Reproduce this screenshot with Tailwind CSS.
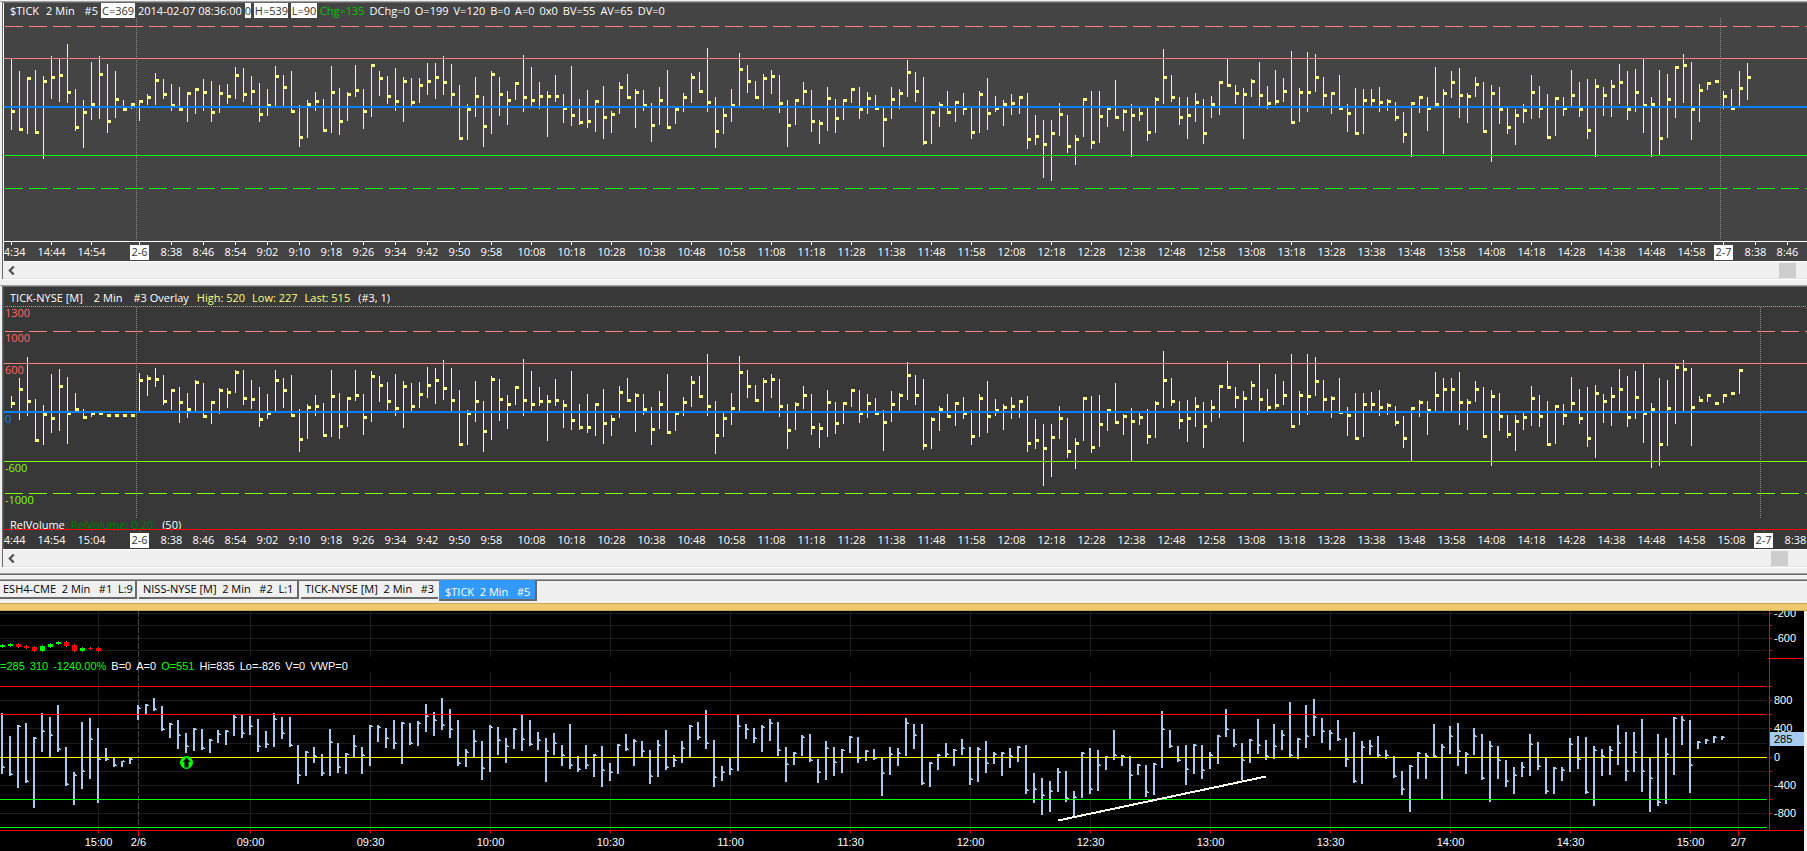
<!DOCTYPE html>
<html lang="en">
<head>
  <meta charset="UTF-8" />
  <meta name="viewport" content="width=device-width, initial-scale=1.0" />
  <title>$TICK 2 Min</title>
  <script src="https://cdn.jsdelivr.net/npm/@tailwindcss/browser@4"></script>
</head>
<body class="min-h-screen bg-[#f0f0f0] font-['Open_Sans','Noto_Sans',sans-serif] text-[11px] leading-[15px] text-white overflow-x-hidden">
  <main class="flex flex-col">

    <!-- $TICK chart -->
    <section class="mt-px border-t border-[#a0a0a0]">
      <div class="ml-[2px] border-l border-t border-[#696969]">
        <div class="border-l border-white bg-[#444444]">
          <header class="flex h-[15px] gap-[3px] overflow-hidden whitespace-pre pl-[6px]">
            <h1 class="flex w-[88px] gap-[7px]"><span>$TICK</span><span>2 Min</span><span class="ml-auto">#5</span></h1>
            <span class="w-[34px] overflow-hidden bg-white pl-px text-[#333333]">C=369</span>
            <span>2014-02-07 08:36:00</span>
            <span class="w-[6px] overflow-hidden bg-white text-[#333333]">0</span>
            <span class="w-[34px] overflow-hidden bg-white pl-px text-[#333333]">H=539</span>
            <span class="w-[26px] overflow-hidden bg-white pl-px text-[#333333]">L=90</span>
            <p class="flex gap-[5px]">
              <span class="text-[#00c800]">Chg=135</span>
              <span>DChg=0</span>
              <span>O=199</span>
              <span>V=120</span>
              <span>B=0</span>
              <span>A=0</span>
              <span>0x0</span>
              <span>BV=55</span>
              <span>AV=65</span>
              <span>DV=0</span>
            </p>
          </header>
          <svg class="block h-[243px] w-full" shape-rendering="crispEdges">
            <g transform="translate(-4,-18)">
              <path d="M136.5 18V240M1720.5 18V240" stroke="#8c8c8c" stroke-dasharray="1 1" />
              <line x1="5" x2="102%" y1="26.5" y2="26.5" stroke="#ff8080" stroke-dasharray="18 6" />
              <line x1="5" x2="102%" y1="188.5" y2="188.5" stroke="#00ff00" stroke-dasharray="18 6" />
              <g id="tickBars" transform="translate(0,0)" fill="#ffff80"></g>
              <rect x="4" y="58" width="100%" height="1" fill="#ff8080" />
              <rect x="4" y="155" width="100%" height="1" fill="#00ff00" />
              <rect x="4" y="106" width="100%" height="2" fill="#0a80ff" />
              <rect x="4" y="241" width="100%" height="1" fill="#ffffff" />
              <g id="tickAxis" transform="translate(0,242)" fill="#ffffff"></g>
            </g>
          </svg>
        </div>
        <div class="flex h-[18px] items-center border-y border-t-white border-b-[#e3e3e3] pr-[11px]">
          <button type="button" class="flex h-4 w-4 items-center justify-center" aria-label="Scroll left">
            <svg class="h-[9px] w-[9px]" viewBox="0 0 8 8" fill="none" stroke="#505050" stroke-width="2"><path d="M6 0.5L2.5 4L6 7.5" /></svg>
          </button>
          <div class="ml-auto h-[15px] w-[17px] bg-[#cdcdcd]"></div>
        </div>
      </div>
      <div class="h-[6px] border-t border-white"></div>
    </section>

    <!-- TICK-NYSE chart -->
    <section class="border-t border-[#a0a0a0]">
      <div class="ml-[2px] border-l border-t border-[#696969]">
        <div class="border-l border-[#ff0000] bg-[#383838]">
          <header class="flex h-[18px] items-end gap-[8px] whitespace-pre pl-[6px] text-white">
            <h2 class="flex gap-[11px]"><span>TICK-NYSE [M]</span><span>2 Min</span><span>#3 Overlay</span></h2>
            <p class="flex gap-[7px] text-[#ffff80]"><span>High: 520</span><span>Low: 227</span><span>Last: 515</span></p>
            <span>(#3, 1)</span>
          </header>
          <svg class="block h-[213px] w-full" shape-rendering="crispEdges">
            <g transform="translate(-4,-305)">
              <path d="M136.5 307V518M1760.5 307V518" stroke="#8c8c8c" stroke-dasharray="1 1" />
              <line x1="5" x2="102%" y1="306.5" y2="306.5" stroke="#ff8080" stroke-dasharray="1 1" />
              <line x1="5" x2="102%" y1="331.5" y2="331.5" stroke="#ff8080" stroke-dasharray="18 6" />
              <line x1="5" x2="102%" y1="493.5" y2="493.5" stroke="#80ff00" stroke-dasharray="18 6" />
              <g id="nyseBars" transform="translate(0,280)" fill="#ffff80"></g>
              <rect x="4" y="363" width="100%" height="1" fill="#ff8080" />
              <rect x="4" y="461" width="100%" height="1" fill="#80ff00" />
              <rect x="4" y="411" width="100%" height="2" fill="#0a80ff" />
              <g fill="#ff6464">
                <text x="5" y="317">1300</text>
                <text x="5" y="342">1000</text>
                <text x="5" y="374">600</text>
              </g>
              <text x="5" y="423" fill="#0a80ff">0</text>
              <g fill="#80ff00">
                <text x="5" y="472">-600</text>
                <text x="5" y="504">-1000</text>
              </g>
            </g>
          </svg>
          <div class="flex h-[11px] gap-[6px] overflow-hidden whitespace-pre pl-[6px] leading-[13px]">
            <span>RelVolume</span><span class="text-[#008000]">RelVolume: 0.20</span><span class="ml-[3px]">(50)</span>
          </div>
          <svg class="block h-[20px] w-full" shape-rendering="crispEdges">
            <rect width="100%" height="1" fill="#ff0000" />
            <g id="nyseAxis" transform="translate(-4,1)" fill="#ff0000"></g>
          </svg>
        </div>
        <div class="flex h-[18px] items-center border-y border-t-white border-b-[#e3e3e3] pr-[19px]">
          <button type="button" class="flex h-4 w-4 items-center justify-center" aria-label="Scroll left">
            <svg class="h-[9px] w-[9px]" viewBox="0 0 8 8" fill="none" stroke="#505050" stroke-width="2"><path d="M6 0.5L2.5 4L6 7.5" /></svg>
          </button>
          <div class="ml-auto h-[15px] w-[17px] bg-[#cdcdcd]"></div>
        </div>
      </div>
      <div class="h-[6px] border-t border-white"></div>
      <div class="h-[7px] border-y border-t-[#a0a0a0] border-b-[#a0a0a0] shadow-[inset_0_1px_#696969]"></div>
    </section>

    <!-- Chart tabs -->
    <nav class="flex h-[23px] items-start border-t border-[#696969] text-black">
      <button type="button" class="h-[18px] w-[137px] whitespace-pre border-r-2 border-b-2 border-[#696969] pb-px pl-[3px] text-left">ESH4-CME  2 Min   #1  L:9</button>
      <button type="button" class="ml-[2px] h-[18px] w-[160px] whitespace-pre border-r-2 border-b-2 border-[#696969] pb-px pl-[4px] text-left">NISS-NYSE [M]  2 Min   #2  L:1</button>
      <button type="button" class="ml-[2px] h-[18px] w-[137px] whitespace-pre border-b-2 border-[#696969] pb-px pl-[4px] text-left">TICK-NYSE [M]  2 Min   #3</button>
      <button type="button" class="-mt-px ml-px h-[21px] w-[98px] whitespace-pre border-r-2 border-b-2 border-[#696969] bg-[#3399ff] pt-[3px] pl-[6px] text-left text-white">$TICK  2 Min   #5</button>
    </nav>
    <div class="h-[8px] border-y border-[#c8a850] bg-[#f0c86e]"></div>

    <!-- Black tick chart with price axis -->
    <section class="relative flex bg-black pr-[3px] font-['Liberation_Sans',Arial,sans-serif] shadow-[inset_-3px_0_#f0f0f0]">
      <svg class="h-[240px] min-w-0 flex-1" shape-rendering="crispEdges">
        <g transform="translate(0,-611)">
          <g id="grid" fill="#1c1c1c"></g>
          <line x1="138.5" x2="138.5" y1="611" y2="829" stroke="#484848" stroke-dasharray="6 2" />
          <g id="candles"></g>
          <g id="blueBars" transform="translate(0,565)" fill="#a6caf0"></g>
          <rect y="686" width="1767" height="1" fill="#ff0000" />
          <rect y="714" width="1767" height="1" fill="#ff0000" />
          <rect y="799" width="1767" height="1" fill="#00ff00" />
          <rect y="827" width="1767" height="1" fill="#00ff00" />
          <rect y="757" width="1767" height="1" fill="#ffff00" />
          <path d="M1058 820.5L1266 776.5" stroke="#fffff0" stroke-width="2" fill="none" />
          <rect y="830" width="100%" height="1" fill="#ff0000" />
          <g id="timeAxis" fill="#ff0000"></g>
          <g shape-rendering="auto">
            <circle cx="186.5" cy="762.5" r="6.5" fill="#00ff00" />
            <path d="M186.5 757.5L190.5 762H188.5V767.5H184.5V762H182.5Z" fill="#000000" />
          </g>
        </g>
      </svg>
      <svg class="h-[240px] w-[36px] flex-none" shape-rendering="crispEdges">
        <g id="priceAxis" transform="translate(0,-611)" fill="#ff0000">
          <rect x="1" y="611" width="1" height="220" />
          <rect y="658" width="36" height="1" />
          <rect y="830" width="36" height="1" />
        </g>
      </svg>
      <p class="absolute left-0 top-[48px] flex gap-[5px] text-[11px] leading-[15px] whitespace-pre text-[#00ff00]">
        <span>=285</span><span>310</span><span>-1240.00%</span><span class="text-white">B=0</span><span class="text-white">A=0</span><span>O=551</span><span class="text-white">Hi=835</span><span class="text-white">Lo=-826</span><span class="text-white">V=0</span><span class="text-white">VWP=0</span>
      </p>
    </section>
  </main>

  <script>
    // Bars are "high,low,last", measured down from the top of the pane in 1/3 px
    const TICK = `175,390,334 213,392,388 231,402,235 210,402,398 228,477,244 168,297,232 177,306,226 132,309,277 267,393,382 300,444,337
      186,360,313 168,357,223 192,399,364 213,354,298 300,330,328 312,327,313 302,363,304 282,315,292 219,315,241 237,297,283
      252,333,317 261,333,328 280,366,280 267,342,268 237,333,277 243,366,337 255,339,280 252,312,289 201,297,226 204,306,283
      228,315,274 249,366,343 267,348,317 198,321,229 225,318,262 213,336,334 315,441,412 300,414,313 276,333,304 297,394,391
      198,399,277 264,405,364 276,363,283 195,291,271 267,387,334 193,351,196 213,288,235 228,312,289 204,333,304 231,366,244
      234,318,307 234,309,256 189,285,244 189,297,232 168,285,247 192,318,283 255,417,415 312,420,328 231,351,289 288,441,379
      213,402,223 231,348,283 273,375,301 250,300,250 165,336,292 201,321,301 246,327,289 273,411,289 225,306,289 282,369,325
      198,378,346 297,375,367 270,384,364 300,396,304
      258,417,352 333,399,343 246,342,262 222,296,292 267,384,277 270,333,317 309,426,376 261,375,301 210,386,382 322,372,328
      279,336,292 219,309,232 216,277,274 144,336,307 291,444,394 321,402,346 267,366,316 159,320,208 195,279,244 243,296,292
      222,327,235 210,282,229 225,339,310 300,441,376 300,375,301 246,315,274 270,396,364 360,432,370 261,393,295 297,399,355
      300,360,301 265,309,268 261,357,328 276,342,295 285,328,325 318,441,358 261,357,298 267,327,280 180,291,217 216,306,274
      231,435,427 335,432,337 306,381,316 273,340,337 303,366,307 279,345,325 318,417,397 273,399,283 234,390,340 288,336,325
      300,378,313 282,345,310 290,342,292 279,447,418 345,435,409 360,534,433 360,543,400 309,408,343 345,459,439 405,495,418
      296,411,298 273,447,427 273,429,349 322,381,325 240,355,352 328,393,334 312,471,346 322,363,340 318,423,397 291,399,298
      147,312,232 225,306,292 291,375,352 291,417,346 279,366,307 297,432,400
      288,354,313 244,345,247 177,260,256 255,312,280 264,417,283 237,291,244 186,318,286 258,327,310 210,315,304 234,306,274
      153,371,367 264,366,277 156,336,277 162,276,232 231,318,286 277,342,280 225,327,325 312,396,340 264,404,400 267,402,301
      267,318,301 261,336,307 297,333,304 306,363,352 336,429,403 306,471,310 289,339,292 291,393,325 201,318,313 267,462,280
      213,294,247 204,354,286 279,369,289 231,291,253 246,398,394 255,486,280 261,372,328 320,402,382 327,435,346 312,369,331
      225,357,277 258,354,325 282,416,412 291,408,295 291,348,325 210,318,286 246,351,328 237,417,391 237,471,259 261,348,286
      240,351,259 192,312,247 213,360,328 207,336,277 177,399,317 291,471,313 210,468,415 222,414,298 199,354,202 162,309,196
      186,420,328 252,366,271 248,270,250 241,250,244 273,327,289 267,330,325 213,318,265 189,300,232`;

    const NYSE = `348,384,370 294,420,328 231,408,364 357,485,481 375,495,403 282,459,415 267,453,319 291,492,400 339,390,388 387,415,412
      396,411,401 402,403,401 402,409,406 403,410,406 403,410,406 403,410,406 279,393,301 285,348,295 264,321,298 285,375,364
      328,390,331 321,429,367 339,414,388 300,393,307 309,412,409 364,432,367 324,402,331 324,384,337 270,339,277 270,375,355
      300,387,358 321,441,418 342,417,401 270,393,301 294,384,331 285,409,406 387,516,478 372,477,382 345,408,379 369,470,466
      270,471,349 339,477,439 352,441,355 270,363,346 342,465,412 273,426,289 288,366,316 306,390,364 282,408,385 303,444,319
      309,393,379 306,384,343 261,354,316 264,372,301 240,360,325 264,393,361 330,497,493 390,495,400 303,426,364 363,516,454
      288,480,298 297,423,358 345,447,373 320,375,322 237,408,361 273,393,373 321,378,364 345,483,364 297,378,361 360,444,376
      273,450,421 372,450,442 342,459,442 372,468,373
      327,492,430 405,468,418 318,414,337 294,364,361 339,456,346 342,405,388 381,495,448 333,447,373 282,461,457 396,453,401
      351,408,367 288,381,307 288,353,349 222,408,379 363,522,466 396,471,415 339,435,385 228,393,277 270,354,319 315,364,361
      294,393,304 282,354,298 297,411,379 372,507,451 366,450,373 318,387,346 342,465,442 429,504,445 330,471,367 366,462,430
      366,432,370 328,381,331 330,429,401 342,414,370 354,403,400 390,513,427 333,426,373 339,396,346 246,360,286 285,375,346
      297,510,496 411,507,418 378,453,388 342,412,409 366,438,370 351,417,400 390,495,469 342,471,355 303,459,409 357,408,391
      372,450,382 351,417,379 360,414,364 348,516,490 417,507,481 432,618,505 432,591,472 378,477,415 414,534,514 474,567,490
      352,483,355 348,519,502 345,501,433 390,453,391 309,430,427 402,465,409 384,543,424 400,435,412 387,492,469 363,474,370
      213,384,301 294,378,364 363,447,421 360,486,415 351,441,379 366,504,439
      360,426,382 316,414,319 243,326,322 321,384,352 333,486,355 303,360,316 252,393,358 327,393,382 282,387,376 303,375,346
      222,443,439 333,435,346 222,405,349 231,348,304 300,393,358 348,414,355 294,396,396 381,468,406 339,479,475 339,471,373
      336,393,373 330,408,382 369,405,376 378,438,427 408,504,475 381,543,385 360,411,367 363,465,391 276,393,346 294,393,328
      294,393,328 276,435,367 357,450,367 303,366,328 321,472,469 330,558,349 339,453,409 405,474,463 405,513,424 396,450,412
      318,438,355 345,441,409 363,497,493 375,492,379 372,435,406 291,393,370 327,432,415 321,501,475 315,534,340 342,429,364
      321,438,349 267,393,328 288,441,412 273,417,352 252,489,400 369,564,388 294,558,493 300,498,385 252,432,262 240,393,268
      264,498,382 348,364,361 342,366,346 367,373,370 343,369,346 337,343,340 268,342,271`;

    const BLUE = `444,627,606 513,633,628 480,669,483 474,654,650 516,729,519 444,561,498 456,576,511 420,561,553 546,663,658 621,720,630
      471,672,619 459,642,522 489,714,583 549,588,583 580,606,601 588,606,590 579,597,582 420,465,430 417,447,420 399,438,433
      423,498,492 474,519,478 465,552,510 504,564,544 489,558,492 492,555,549 522,564,525 495,534,508 495,540,499 450,513,456
      450,519,505 453,510,484 462,561,543 498,549,538 444,546,462 456,522,505 456,546,541 540,657,630 558,633,562 546,594,573
      567,633,624 492,633,531 534,624,606 564,627,568 510,576,543 546,627,571 480,603,484 480,531,487 489,549,520 465,552,535
      471,597,475 474,540,535 468,543,474 417,501,453 441,513,465 399,495,480 432,519,492 465,603,595 552,606,561 495,576,528
      528,645,609 480,621,487 486,570,526 519,594,543 489,552,492 450,558,523 465,543,538 501,555,526 519,651,559 504,570,534
      540,603,570 477,612,601 573,621,612 540,612,600 567,636,571 543,666,615
      594,648,621 537,627,541 507,558,553 522,603,528 528,576,559 555,657,634 525,636,541 495,615,607 570,606,586 528,594,549
      480,576,484 471,525,517 435,552,535 525,666,637 603,648,621 579,630,612 450,618,484 477,522,492 489,534,519 480,561,487
      462,528,474 471,573,556 546,651,598 561,600,565 510,573,516 507,591,586 582,654,622 528,645,549 546,633,591 552,624,556
      513,564,517 516,594,580 555,588,558 552,585,580 576,693,625 546,630,568 549,603,565 459,573,475 477,552,511 477,660,655
      591,666,595 567,615,571 534,576,568 552,603,556 522,570,549 546,660,643 546,651,552 528,624,595 561,597,567 561,633,565
      549,609,574 543,591,547 540,687,676 624,714,672 639,750,690 648,741,678 609,681,621 618,711,700 678,753,696 561,699,565
      549,687,672 555,678,600 573,615,577 495,585,571 570,603,574 573,705,631 597,630,600 600,696,682 594,690,598 438,609,492
      495,549,544 543,591,586 540,660,612 537,627,541 540,642,615
      561,612,571 510,597,514 432,516,492 492,546,538 534,645,586 522,594,525 462,567,541 525,585,574 477,582,543 495,555,510
      411,576,571 519,582,522 420,549,514 402,513,456 459,534,499 495,555,504 465,528,522 519,606,583 501,654,648 528,657,546
      525,570,543 513,576,571 555,582,571 573,639,634 618,690,672 600,741,603 561,642,565 564,642,574 477,576,574 537,705,546
      483,567,514 474,603,558 561,627,568 489,570,514 507,645,640 528,711,543 543,642,586 585,666,648 606,687,630 591,636,606
      507,633,538 531,615,603 576,687,679 606,687,609 606,648,616 519,621,538 513,612,583 516,687,682 543,723,556 552,633,573
      543,630,556 480,600,535 501,648,619 501,621,562 462,681,619 576,741,640 507,723,712 519,717,568 456,630,460 453,540,465
      465,684,600 528,552,532 522,537,526 513,534,517 513,525,517`;

    const BAR_STEP = 8;

    function rect(x, y, w, h, fill) {
      return `<rect x="${x}" y="${y}" width="${w}" height="${h}"${fill ? ` fill="${fill}"` : ""}/>`;
    }

    function label(x, y, text, fill = "#ffffff", anchor = "middle") {
      return `<text x="${x}" y="${y}" text-anchor="${anchor}" fill="${fill}">${text}</text>`;
    }

    function parse(data) {
      return data.trim().split(/\s+/).map((bar) => bar.split(",").map((v) => v / 3));
    }

    // High-low bars with a square for the last price
    function drawYellow(id, data) {
      document.getElementById(id).innerHTML = parse(data).map(([high, low, last], i) => {
        const x = 11 + i * BAR_STEP;
        const top = Math.round(high);
        return rect(x, top, 1, Math.round(low) - top) + rect(x, Math.floor(last) - 1, 4, 3);
      }).join("");
    }

    // High-low bars with a small notch for the last price
    function drawBlue(id, data) {
      document.getElementById(id).innerHTML = parse(data).map(([high, low, last], i) => {
        const x = 1 + i * BAR_STEP;
        const top = Math.round(high);
        const y = Math.floor(last);
        return rect(x, top, 2, Math.round(low) - top) + rect(x + 2, y, 2, 1) + rect(x + 2, y - 1, 1, 1);
      }).join("");
    }

    function clock(minutes) {
      return Math.floor(minutes / 60) + ":" + String(minutes % 60).padStart(2, "0");
    }

    // Labels every 8 minutes until 9:58, then every 10
    function drawTimes(id, before, after) {
      const times = before.map((text, i) => [text, 11 + i * 40]);
      times.push(["2-6", 139]);
      for (let i = 0; i < 11; i++) times.push([clock(518 + i * 8), 171 + i * 32]);
      for (let i = 0; i < 30; i++) times.push([clock(608 + i * 10), 531 + i * 40]);
      times.push(...after);
      document.getElementById(id).innerHTML = times.map(([text, x]) => {
        const isDate = text.includes("-");
        return rect(x, 0, 1, 3) + (isDate ? rect(x - 9, 3, 19, 15, "#ffffff") : "") + label(x + 0.5, 14, text, isDate ? "#333333" : "#ffffff");
      }).join("");
    }

    drawYellow("tickBars", TICK);
    drawYellow("nyseBars", NYSE);
    drawBlue("blueBars", BLUE);
    drawTimes("tickAxis", ["14:34", "14:44", "14:54"], [["2-7", 1723], ["8:38", 1755], ["8:46", 1787]]);
    drawTimes("nyseAxis", ["14:44", "14:54", "15:04"], [["15:08", 1731], ["2-7", 1763], ["8:38", 1795]]);

    // Grid
    const columns = [98, 1738];
    for (let i = 0; i < 13; i++) columns.push(250 + i * 120);
    const rows = [613, 625, 638, 650, 700, 728, 743, 771, 785, 813];
    document.getElementById("grid").innerHTML =
      columns.map((x) => rect(x, 611, 1, 46) + rect(x, 672, 1, 158)).join("") +
      rows.map((y) => rect(0, y, 1767, 1)).join("");

    // Time axis
    const hours = [["15:00", 98], ["2/6", 138], ["2/7", 1738]];
    for (let i = 0; i < 13; i++) hours.push([clock(540 + i * 30).padStart(5, "0"), 250 + i * 120]);
    document.getElementById("timeAxis").innerHTML =
      hours.map(([text, x]) => rect(x, 831, 1, text.includes("/") ? 5 : 2) + label(x + 0.5, 846, text)).join("");

    // Price axis
    const prices = [["-200", 613], ["-600", 638], ["800", 700], ["400", 728], ["0", 757], ["-400", 785], ["-800", 813]];
    document.getElementById("priceAxis").innerHTML +=
      [...rows, 686, 714, 757, 799].map((y) => rect(2, y, 2, 1)).join("") +
      prices.map(([text, y]) => label(6, y + 4, text, "#ffffff", "start")).join("") +
      rect(2, 732, 34, 14, "#a6caf0") + label(6, 743, "285", "#000000", "start");

    // Small candles at the top left
    const candles = [[240, 246, 1], [237, 243, 1], [237, 246, 0], [243, 249, 0], [246, 258, 0], [243, 258, 1], [237, 246, 1],
      [231, 237, 1], [231, 243, 0], [240, 258, 0], [249, 258, 1], [249, 251, 0], [249, 258, 0]];
    document.getElementById("candles").innerHTML = candles.map(([top, bottom, up], i) => {
      const y = 565 + Math.round(top / 3);
      const h = Math.max(1, Math.round((bottom - top) / 3));
      return rect(2 + i * BAR_STEP, y - 1, 1, h + 2, "#808080") + rect(i * BAR_STEP, y, 5, h, up ? "#00ff00" : "#ff0000");
    }).join("");
  </script>
</body>
</html>
